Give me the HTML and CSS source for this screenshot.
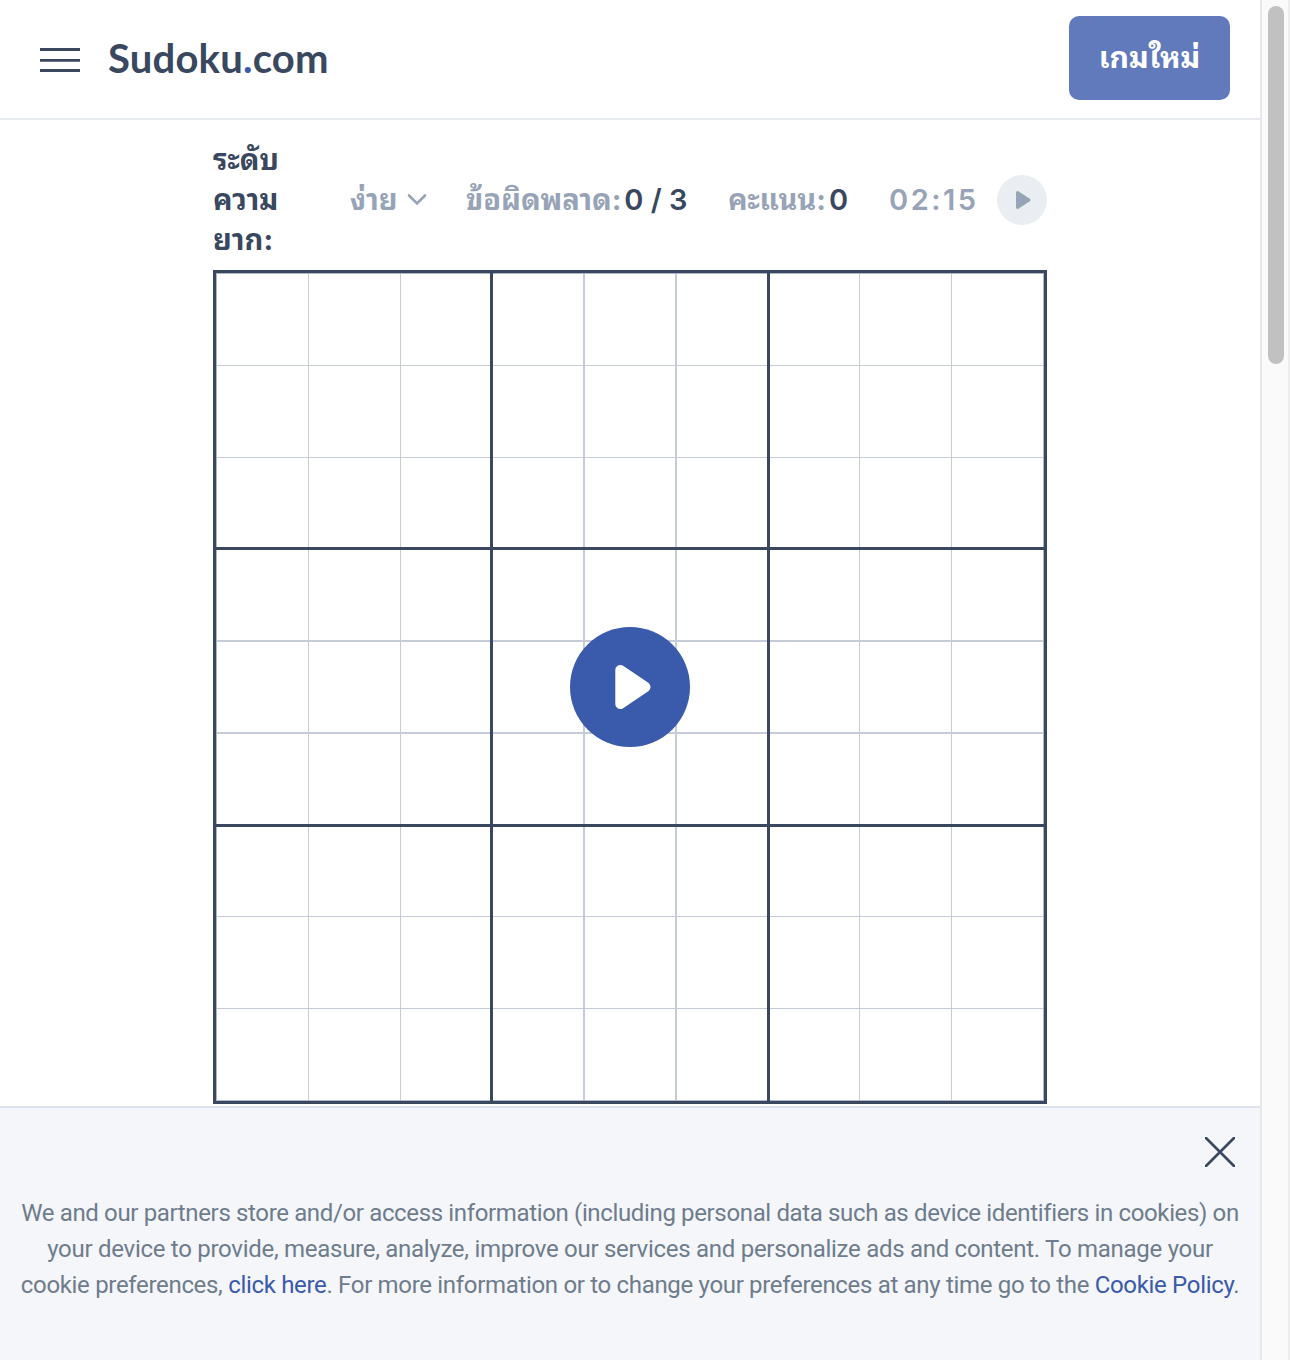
FILE: index.html
```html
<!DOCTYPE html>
<html lang="th">
<head>
<meta charset="utf-8">
<title>Sudoku.com</title>
<link rel="stylesheet" href="styles.css">
</head>
<body>
<div class="page">
  <header class="header">
    <button class="menu" aria-label="Menu"><svg width="40" height="24" viewBox="0 0 40 24"><path d="M0 1.5H40M0 12.3H40M0 22.5H40" stroke="#39475f" stroke-width="2.8"/></svg></button>
    <div class="logo">Sudoku<span>.</span>com</div>
    <button class="new-game">เกมใหม่</button>
  </header>
  <main class="game">
    <div class="info">
      <div class="label">ระดับ<br>ความ<br>ยาก:</div>
      <div class="level"><span>ง่าย</span><svg width="20" height="14" viewBox="0 0 20 14"><path d="M2 2.5L10 10.5L18 2.5" fill="none" stroke="#97a3b6" stroke-width="2.6" stroke-linecap="round"/></svg></div>
      <div class="mistakes"><span>ข้อผิดพลาด:</span><b>0 / 3</b></div>
      <div class="score"><span>คะแนน:</span><b>0</b></div>
      <div class="timer">02:15</div>
      <button class="pause" aria-label="Play"><svg width="50" height="50" viewBox="0 0 50 50"><path d="M20.5 17.5L32 25L20.5 32.5Z" fill="#97a3b6" stroke="#97a3b6" stroke-width="3" stroke-linejoin="round"/></svg></button>
    </div>
    <div class="board">
      <div class="box top left"><i></i><i></i><i></i><i></i><i></i><i></i><i></i><i></i><i></i></div>
      <div class="box top"><i></i><i></i><i></i><i></i><i></i><i></i><i></i><i></i><i></i></div>
      <div class="box top right"><i></i><i></i><i></i><i></i><i></i><i></i><i></i><i></i><i></i></div>
      <div class="box left"><i></i><i></i><i></i><i></i><i></i><i></i><i></i><i></i><i></i></div>
      <div class="box"><i></i><i></i><i></i><i></i><i></i><i></i><i></i><i></i><i></i></div>
      <div class="box right"><i></i><i></i><i></i><i></i><i></i><i></i><i></i><i></i><i></i></div>
      <div class="box bottom left"><i></i><i></i><i></i><i></i><i></i><i></i><i></i><i></i><i></i></div>
      <div class="box bottom"><i></i><i></i><i></i><i></i><i></i><i></i><i></i><i></i><i></i></div>
      <div class="box bottom right"><i></i><i></i><i></i><i></i><i></i><i></i><i></i><i></i><i></i></div>
      <button class="play" aria-label="Resume"><svg width="120" height="120" viewBox="0 0 120 120"><path d="M50.3 43L75.5 60L50.3 77Z" fill="#fff" stroke="#fff" stroke-width="10" stroke-linejoin="round"/></svg></button>
    </div>
  </main>
  <section class="cookies">
    <button class="close" aria-label="Close"><svg width="30" height="30" viewBox="0 0 30 30"><path d="M1 1L29 29M29 1L1 29" stroke="#39475f" stroke-width="2.6" stroke-linecap="round"/></svg></button>
    <p><span class="tight">We and our partners store and/or access information (including personal data such as device identifiers in cookies) on</span><br><span class="wide">your device to provide, measure, analyze, improve our services and personalize ads and content. To manage your</span><br>cookie preferences, <a>click here</a>. For more information or to change your preferences at any time go to the <a>Cookie Policy</a>.</p>
  </section>
</div>
<aside class="scrollbar"><div class="thumb"></div></aside>
</body>
</html>
```
FILE: styles.css
```css
* { box-sizing: border-box; }
body { margin: 0; display: flex; width: 1290px; height: 1360px; overflow: hidden; background: #fff; font-family: Inter, "Noto Sans Thai Looped", "Noto Looped Thai", Loma, Garuda, Waree, "Noto Sans Thai", sans-serif; color: #39475f; }
button { border: 0; padding: 0; background: none; font: inherit; display: block; }
svg { display: block; flex: none; }
.page { width: 1260px; height: 1360px; flex: none; display: flex; flex-direction: column; }
.header { height: 120px; flex: none; border-bottom: 2px solid #e6eaee; display: flex; align-items: flex-start; padding: 16px 30px 0 40px; }
.menu { margin-top: 32px; }
.logo { margin: 16px auto 0 28px; font: 700 40px/52px Lato, sans-serif; letter-spacing: 0.2px; white-space: nowrap; }
.logo span { color: #3a5aab; }
.new-game { width: 161px; height: 84px; padding-bottom: 7px; border-radius: 10px; background: #617abb; color: #fff; font-size: 30px; font-weight: 700; white-space: nowrap; }
.game { width: 834px; margin: 0 auto; flex: none; }
.info { height: 150px; padding-top: 10px; display: flex; align-items: center; font-size: 29px; font-weight: 700; line-height: 40px; color: #97a3b6; white-space: nowrap; }
.label { width: 137px; color: #39475f; }
.level { width: 116px; display: flex; align-items: center; gap: 9px; }
.mistakes { width: 262px; display: flex; gap: 3px; }
.score { width: 161px; display: flex; gap: 3px; }
.info b { color: #39475f; font-weight: 600; }
.timer { width: 108px; letter-spacing: 2.5px; font-weight: 600; }
.pause { width: 50px; height: 50px; border-radius: 50%; background: #eaedf2; }
.board { position: relative; width: 834px; height: 834px; border: 3px solid #39475f; background: #39475f; display: grid; grid-template: repeat(3, 274px) / repeat(3, 274px); gap: 3px; }
.box { --line: 2px; --row: 2px; display: grid; grid-template-rows: 92px 92px 90px; grid-template-columns: 92px 92px 90px; background: #fff; border: 0 solid #aeb7c7; }
.box.left { --line: 1px; grid-template-columns: 92px 92px 89px; border-left-width: 1px; }
.box.right { --line: 1px; grid-template-columns: 90px 92px 91px; border-right-width: 1px; }
.box.top { --row: 1px; grid-template-rows: 92px 92px 89px; border-top-width: 1px; }
.box.bottom { --row: 1px; grid-template-rows: 90px 92px 91px; border-bottom-width: 1px; }
.box i { border: 0 solid #c6cbd8; }
.box i:not(:nth-child(3n)) { border-right-width: var(--line); }
.box i:nth-child(-n+6) { border-bottom-width: var(--row); }
.play { position: absolute; left: 354px; top: 354px; width: 120px; height: 120px; border-radius: 50%; background: #3a5aab; }
.cookies { flex: 1; margin-top: 2px; border-top: 2px solid #dce3ed; background: #f4f6fa; padding: 29px 0 0; }
.close { margin: 0 25px 0 auto; }
.cookies p { margin: 28px 0 0; font: 24px/36px Roboto, sans-serif; color: #6e7c8c; text-align: center; white-space: nowrap; letter-spacing: -0.32px; }
.cookies .tight { letter-spacing: -0.355px; }
.cookies .wide { letter-spacing: -0.28px; }
.cookies a { color: #3a5aab; }
.scrollbar { width: 30px; height: 1360px; border-left: 2px solid #e8e8e8; border-right: 2px solid #ededed; background: #fafafa; padding: 6px 0 0 6px; }
.thumb { width: 16px; height: 358px; border-radius: 8px; background: #c1c1c1; }
```
